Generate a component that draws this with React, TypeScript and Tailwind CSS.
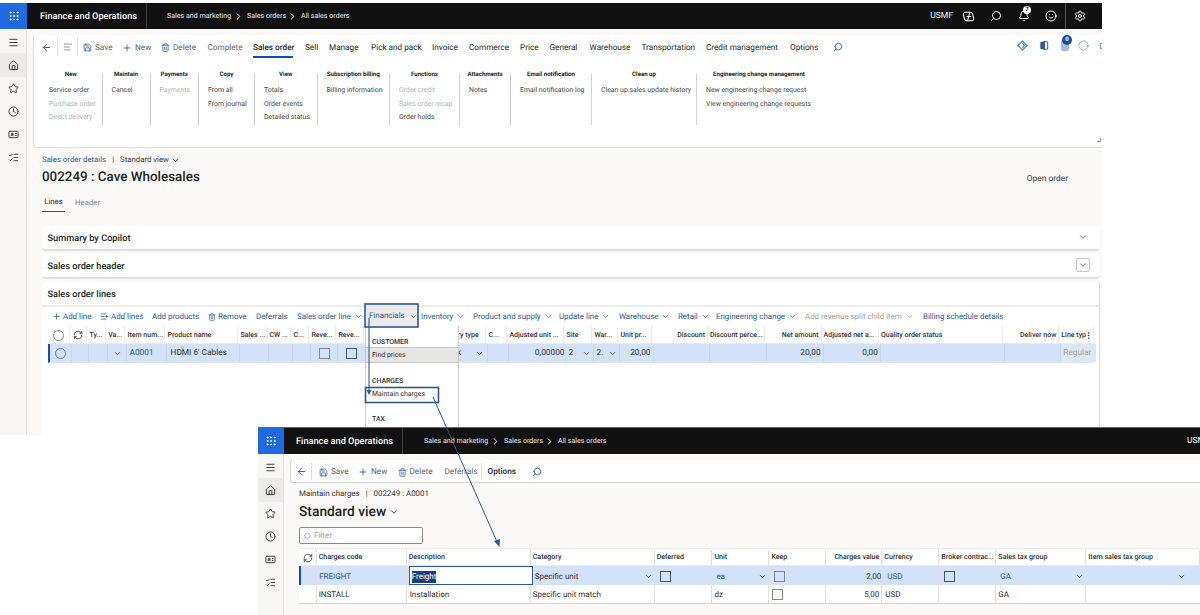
import React from "react";
import { ArrowLeft, Bell, ChevronDown, ChevronRight, Grip, Home, Menu, Plus, RefreshCw, Save, Search, Settings, Smile, Star, Clock, Trash2, AlignLeft, ListChecks, IdCard, EllipsisVertical, ListPlus, Circle } from "lucide-react";

const ink = "text-[#323130]";
const link = "text-[#2b579a]";

function Box({ blue = false }: { blue?: boolean }) {
  return <span className={"block w-[11px] h-[11px] border bg-transparent " + (blue ? "border-[#44546a]" : "border-[#8a8886]")} />;
}

function TopBar() {
  return (
    <div className="flex items-center h-[26px] bg-[#111111] text-white shrink-0">
      <div className="flex items-center justify-center w-[27px] h-full bg-[#1f6ae0] shrink-0">
        <Grip size={12} strokeWidth={2} />
      </div>
      <div className="flex items-center h-full w-[120px] pl-[13px] pt-[1px] border-r border-[#444] text-[9.2px] font-medium whitespace-nowrap shrink-0">Finance and Operations</div>
      <div className="flex items-center pl-[20px] pt-[1px] text-[7.1px] text-[#eeeeee] whitespace-nowrap">
        <span className="w-[60px]">Sales and marketing</span>
        <ChevronRight size={11} className="ml-[6px] mr-[3px]" />
        <span className="w-[36px]">Sales orders</span>
        <ChevronRight size={11} className="ml-[4px] mr-[3px]" />
        <span>All sales orders</span>
      </div>
      <div className="flex-1" />
      <div className="flex items-center h-full">
        <span className="text-[8.5px] mr-[9px]">USMF</span>
        <svg width="13" height="13" viewBox="0 0 14 14" fill="none" stroke="white" strokeWidth="1.1" className="mr-[15px]">
          <path d="M4 2.5h5a2.5 2.5 0 0 1 2.4 1.8l1.1 4.4A2 2 0 0 1 10.6 11.5H5a2.5 2.5 0 0 1-2.4-1.8L1.5 5.3A2.2 2.2 0 0 1 4 2.5z" />
          <path d="M8.5 2.5 6 11.5M5 7h5" />
        </svg>
        <Search size={12} className="mr-[16px] -scale-x-100" />
        <span className="relative mr-[15px]">
          <Bell size={12} />
          <span className="absolute -top-[4px] left-[5px] w-[8px] h-[8px] rounded-full bg-white text-[#111] text-[6px] leading-[8px] text-center font-bold">7</span>
        </span>
        <Smile size={12} className="mr-[8px]" />
        <div className="h-full border-l border-[#555] mr-[8px]" />
        <Settings size={12} className="mr-[16px]" />
      </div>
    </div>
  );
}

function SideIcons({ w }: { w: string }) {
  return (
    <div className={"flex flex-col items-center h-full bg-[#f7f6f5] border-r border-[#e1dfdd] shrink-0 text-[#323130] pt-[2px] " + w}>
      <div className="flex items-center justify-center h-[22px] w-full"><Menu size={11} /></div>
      <div className="flex items-center justify-center h-[24px] w-full bg-[#edebe9]"><Home size={11} /></div>
      <div className="flex items-center justify-center h-[23px] w-full"><Star size={11} /></div>
      <div className="flex items-center justify-center h-[23px] w-full"><Clock size={11} /></div>
      <div className="flex items-center justify-center h-[23px] w-full"><IdCard size={11} /></div>
      <div className="flex items-center justify-center h-[23px] w-full"><ListChecks size={11} /></div>
    </div>
  );
}

function Cmd({ icon, label, w }: { icon?: React.ReactNode; label: string; w: string }) {
  return (
    <span className={"flex items-center gap-[3px] pt-[2px] whitespace-nowrap shrink-0 text-[#5f5e5c] " + w}>
      {icon}
      {label}
    </span>
  );
}

const ribbon = [
  { w: "w-[62.5px]", t: "New", items: [["Service order", 0], ["Purchase order", 1], ["Direct delivery", 1]] },
  { w: "w-[48px]", t: "Maintain", items: [["Cancel", 0]] },
  { w: "w-[48.5px]", t: "Payments", items: [["Payments", 1]] },
  { w: "w-[56px]", t: "Copy", items: [["From all", 0], ["From journal", 0]] },
  { w: "w-[62.5px]", t: "View", items: [["Totals", 0], ["Order events", 0], ["Detailed status", 0]] },
  { w: "w-[72.5px]", t: "Subscription billing", items: [["Billing information", 0]] },
  { w: "w-[70px]", t: "Functions", items: [["Order credit", 1], ["Sales order recap", 1], ["Order holds", 0]] },
  { w: "w-[51px]", t: "Attachments", items: [["Notes", 0]] },
  { w: "w-[81px]", t: "Email notification", items: [["Email notification log", 0]] },
  { w: "w-[105px]", t: "Clean up", items: [["Clean up sales update history", 0]] },
  { w: "w-[124px]", t: "Engineering change management", items: [["New engineering change request", 0], ["View engineering change requests", 0]], last: true },
];

const tabs = [
  ["Sales order", "w-[52px]"], ["Sell", "w-[24px]"], ["Manage", "w-[42px]"], ["Pick and pack", "w-[61px]"], ["Invoice", "w-[37px]"],
  ["Commerce", "w-[51px]"], ["Price", "w-[29.5px]"], ["General", "w-[40px]"], ["Warehouse", "w-[52px]"], ["Transportation", "w-[64.5px]"],
  ["Credit management", "w-[84px]"], ["Options", "w-[40px]"],
] as const;

function CommandCard() {
  return (
    <div className="ml-[6px] mt-[6px] h-[113px] bg-white rounded-l-[4px] border-b border-l border-[#e1dfdd] shrink-0 relative">
      <div className="flex items-center h-[24px] text-[8.2px] whitespace-nowrap">
        <div className="flex items-center justify-center w-[22px] h-[18px] border-r border-[#e1dfdd] ml-[2px]"><ArrowLeft size={11} className="text-[#2b579a]" /></div>
        <div className="flex items-center justify-center w-[20px] h-[18px] border-r border-[#e1dfdd]"><AlignLeft size={10} className="text-[#8a8886]" /></div>
        <div className="flex items-center ml-[5px]">
          <Cmd w="w-[39px]" icon={<Save size={9} className="text-[#2b579a]" />} label="Save" />
          <Cmd w="w-[39px]" icon={<Plus size={10} className="text-[#2b579a]" />} label="New" />
          <Cmd w="w-[46.5px]" icon={<Trash2 size={9} className="text-[#2b579a]" />} label="Delete" />
          <Cmd w="w-[45.5px]" label="Complete" />
        </div>
        <div className="flex items-center text-[#201f1e]">
          {tabs.map(([t, w], i) => (
            <span key={t} className={"relative flex items-center h-[24px] pt-[2px] shrink-0 " + w + (i === 0 ? " font-medium" : "")}>
              {t}
              {i === 0 && <span className="absolute left-0 bottom-[1px] w-[40px] h-[2px] bg-[#0f4cb5]" />}
            </span>
          ))}
        </div>
        <Search size={10} className="ml-[3px] text-[#2b579a] -scale-x-100" />
        <div className="absolute -right-[1px] top-[5px] flex items-center text-[#2b579a]">
          <svg width="11" height="11" viewBox="0 0 12 12" fill="none" stroke="#2b7cd3" strokeWidth="1.2" className="mr-[11px]"><path d="M6 1 11 6 6 11 1 6z" /><path d="M6 3.5 8 6 6 8.5" /></svg>
          <svg width="10" height="11" viewBox="0 0 10 12" className="mr-[12px]"><path d="M1 2.5 6 1v10L1 9.5z" fill="#2b579a" /><path d="M6 2h3v8H6" fill="none" stroke="#2b579a" /></svg>
          <span className="relative mr-[9px]">
            <span className="block w-[8px] h-[11px] rounded-[2px] bg-[#a9bcd6]" />
            <span className="absolute -top-[5px] left-[1px] w-[10px] h-[10px] rounded-full bg-[#0f4cb5] text-white text-[6px] leading-[10px] text-center font-bold">0</span>
          </span>
          <Circle size={11} className="mr-[11px]" strokeWidth={1} />
          <span className="block w-[3px] h-[6px] border border-[#7f9cc4]" />
        </div>
      </div>
      <div className="flex items-start pl-[6px] mt-[15px] text-[6.9px]">
        {ribbon.map((g) => (
          <div key={g.t} className={"h-[51px] shrink-0 " + g.w + (g.last ? "" : " border-r border-[#d2d0ce]")}>
            <div className="h-[12px] -mt-[5px] text-center font-bold text-[#201f1e] text-[6.1px] leading-[12px] whitespace-nowrap">{g.t}</div>
            <div className="pl-[9px] pt-[3px]">
              {g.items.map(([n, d]) => (
                <div key={n as string} className={"h-[13.5px] leading-[13.5px] whitespace-nowrap " + (d ? "text-[#b3b0ad]" : "text-[#484644]")}>{n}</div>
              ))}
            </div>
          </div>
        ))}
      </div>
      <span className="absolute right-[1px] bottom-[5px] w-[4px] h-[4px] border-r border-b border-[#a19f9d]" />
    </div>
  );
}

function SectionCard({ title, boxed = false }: { title: string; boxed?: boolean }) {
  return (
    <div className="flex items-center justify-between h-[24.5px] mr-[2px] pl-[5.5px] pr-[10px] bg-white rounded-[4px] border-b-2 border-[#e1dfdd] shrink-0">
      <span className="pt-[3px] text-[9.2px] font-medium text-[#201f1e]">{title}</span>
      {boxed ? (
        <span className="flex items-center justify-center w-[14px] h-[14px] border border-[#c8c6c4] rounded-[2px]"><ChevronDown size={10} className="text-[#605e5c]" /></span>
      ) : <ChevronDown size={10} className="text-[#605e5c] mr-[2px]" />}
    </div>
  );
}

const backCols = "grid-cols-[22.6px_17.4px_18.7px_19.3px_40px_73px_29px_24px_18px_27px_28px_72px_50px_21px_57px_28px_26px_34px_55.5px_57px_56.6px_57.4px_124px_56.4px_35px]";
const backHead: [string, string?][] = [
  ["", ""], ["", ""], ["Ty..."], ["Va..."], ["Item num..."], ["Product name"], ["Sales ..."], ["CW ..."], ["C..."], ["Reve..."], ["Reve..."], [""],
  ["Delivery type"], ["C..."], ["Adjusted unit ..."], ["Site"], ["War..."], ["Unit pr..."], ["Discount", "r"], ["Discount perce..."], ["Net amount", "r"], ["Adjusted net a..."], ["Quality order status"], ["Deliver now", "r"], ["Line typ"],
];

function BackGrid() {
  const c = "border-r border-[#c8d5ea]";
  return (
    <div className="ml-[5.5px] mr-[5px] text-[#323130]">
      <div className={"grid h-[18px] bg-white border-b border-[#edebe9] text-[7px] font-medium " + backCols}>
        {backHead.map(([t, a], i) => (
          <div key={i} className={"relative flex items-center border-r border-[#edebe9] px-[2px] pt-[1px] whitespace-nowrap overflow-hidden " + (a === "r" ? "justify-end" : "")}>
            {i === 0 && <span className="block mx-auto w-[11px] h-[11px] rounded-full border border-[#8a8886]" />}
            {i === 1 && <RefreshCw size={10} className="mx-auto" />}
            {t}
            {i === 24 && <EllipsisVertical size={9} className="absolute right-0" />}
          </div>
        ))}
      </div>
      <div className={"grid h-[19px] bg-[#d3e2f8] border-b border-[#dfe6f0] border-l-2 border-l-[#0f4cb5] text-[8.3px] [&>div]:pt-[1px] " + backCols}>
        <div className={"flex items-center justify-center " + c}><span className="block w-[11px] h-[11px] rounded-full border border-[#6b7d96]" /></div>
        <div className={c} />
        <div className={c} />
        <div className={"flex items-center justify-center " + c}><ChevronDown size={9} /></div>
        <div className={"flex items-center pl-[2px] " + c + " " + link}>A0001</div>
        <div className={"flex items-center pl-[3px] whitespace-nowrap " + c}>HDMI 6' Cables</div>
        <div className={c} />
        <div className={c} />
        <div className={c} />
        <div className={"flex items-center justify-center " + c}><Box /></div>
        <div className={"flex items-center justify-center " + c}><Box blue /></div>
        <div className={c} />
        <div className={"flex items-center justify-between pr-[3px] pl-[2px] " + c}><span>Stock</span><ChevronDown size={9} /></div>
        <div className={c} />
        <div className={"flex items-center justify-end pr-[1px] " + c}>0,00000</div>
        <div className={"flex items-center justify-between px-[2px] " + c}><span>2</span><ChevronDown size={9} /></div>
        <div className={"flex items-center justify-between px-[2px] " + c}><span>2.</span><ChevronDown size={9} /></div>
        <div className={"flex items-center justify-end pr-[3px] " + c}>20,00</div>
        <div className={c} />
        <div className={c} />
        <div className={"flex items-center justify-end pr-[2px] " + c}>20,00</div>
        <div className={"flex items-center justify-end pr-[2px] " + c}>0,00</div>
        <div className={c} />
        <div className={c} />
        <div className="flex items-center pl-[2px] bg-[#dde6f3] text-[#a19f9d]">Regular</div>
      </div>
    </div>
  );
}

function Tool({ children, chev = false, dim = false, w }: { children: React.ReactNode; chev?: boolean; dim?: boolean; w: string }) {
  return (
    <span className={"flex items-center shrink-0 whitespace-nowrap " + w + " " + (dim ? "text-[#a19f9d]" : link)}>
      {children}
      {chev && <ChevronDown size={9} className="ml-[3px]" />}
    </span>
  );
}

function FinancialsMenu() {
  return (
    <div className="absolute left-[365px] top-[303px] w-[94px] h-[130px] z-10 text-[#323130]">
      <div className="flex items-center h-[23px] w-[53px] pt-[3px] bg-[#edebe9] pl-[4px] text-[7.9px] text-[#2b579a]">
        Financials<ChevronDown size={9} className="ml-[4px]" />
      </div>
      <div className="bg-white border-l border-r border-[#d2d0ce] h-[107px] text-[6.9px]">
        <div className="pl-[6px] pt-[10px] h-[21px] font-medium leading-[12px]">CUSTOMER</div>
        <div className="flex items-center h-[16px] pl-[6px] bg-[#e8e6e4] border border-[#c8c6c4] -ml-[1px] -mr-[1px]">Find prices</div>
        <div className="pl-[6px] pt-[12px] h-[24px] font-medium leading-[12px]">CHARGES</div>
        <div className="flex items-center h-[15px] pl-[6px]">Maintain charges</div>
        <div className="pl-[6px] pt-[12px] font-medium">TAX</div>
      </div>
    </div>
  );
}

function BackWindow() {
  return (
    <div className="absolute left-0 top-0 w-[1102px] h-[435px] overflow-hidden bg-white flex flex-col pt-[3px]">
      <TopBar />
      <div className="flex flex-1 min-h-0">
        <SideIcons w="w-[27px]" />
        <div className="flex-1 min-w-0 bg-[#faf9f8] flex flex-col">
          <CommandCard />
          <div className="flex items-center h-[14px] mt-[5px] ml-[15px] text-[7.8px] whitespace-nowrap shrink-0">
            <span className={link}>Sales order details</span>
            <span className="mx-[6px] text-[#323130]">|</span>
            <span className={ink}>Standard view</span>
            <ChevronDown size={9} className="ml-[2px]" />
          </div>
          <div className="flex items-center justify-between h-[20px] pt-[3px] ml-[15px] shrink-0">
            <span className="text-[13.4px] font-medium text-[#201f1e] whitespace-nowrap">002249 : Cave Wholesales</span>
            <span className="pt-[2px] text-[8.4px] text-[#323130] mr-[34px]">Open order</span>
          </div>
          <div className="flex h-[19px] mt-[6px] ml-[15px] text-[7.8px] shrink-0">
            <span className="flex items-center justify-center w-[23px] border-b border-[#2b579a] text-[#323130]">Lines</span>
            <span className="flex items-center ml-[10px] text-[#8a8886]">Header</span>
          </div>
          <div className="flex flex-col gap-[3.5px] mt-[14px] ml-[15px] flex-1 min-h-0">
            <SectionCard title="Summary by Copilot" />
            <SectionCard title="Sales order header" boxed />
            <div className="flex-1 bg-white mr-[2px] rounded-t-[4px] border-r border-[#e1dfdd]">
              <div className="flex items-center h-[25px] pl-[5.5px] pt-[2px] border-b-2 border-[#edebe9] text-[9.2px] font-medium text-[#201f1e]">Sales order lines</div>
              <div className="flex items-center h-[19px] pl-[10px] pt-[1px] text-[7.9px]">
                <Tool w="w-[48px]"><Plus size={9} className="mr-[2px]" />Add line</Tool>
                <Tool w="w-[52px]"><ListPlus size={9} className="mr-[2px]" />Add lines</Tool>
                <Tool w="w-[56px]">Add products</Tool>
                <Tool w="w-[48px]"><Trash2 size={8} className="mr-[2px]" />Remove</Tool>
                <Tool w="w-[41px]">Deferrals</Tool>
                <Tool w="w-[68px]" chev>Sales order line</Tool>
                <span className="w-[56px] shrink-0" />
                <Tool w="w-[52px]" chev>Inventory</Tool>
                <Tool w="w-[86px]" chev>Product and supply</Tool>
                <Tool w="w-[60px]" chev>Update line</Tool>
                <Tool w="w-[59px]" chev>Warehouse</Tool>
                <Tool w="w-[38px]" chev>Retail</Tool>
                <Tool w="w-[89px]" chev>Engineering change</Tool>
                <Tool w="w-[118px]" chev dim>Add revenue split child item</Tool>
                <Tool w="w-[80px]">Billing schedule details</Tool>
              </div>
              <BackGrid />
            </div>
          </div>
        </div>
      </div>
    </div>
  );
}

const frontCols = "grid-cols-[17.7px_90px_124px_124px_57.7px_57px_56.7px_56.3px_57px_57px_90px_114px]";
const frontHead = ["", "Charges code", "Description", "Category", "Deferred", "Unit", "Keep", "Charges value", "Currency", "Broker contrac...", "Sales tax group", "Item sales tax group"];

function FrontWindow() {
  const b = "border-r border-[#e1dfdd]";
  return (
    <div className="absolute left-[258px] top-[427px] w-[942px] h-[188px] overflow-hidden bg-white flex flex-col z-20 border-t border-[#666]">
      <div className="flex items-center h-[26px] bg-[#111111] text-white shrink-0">
        <div className="flex items-center justify-center w-[26px] h-full bg-[#1f6ae0] shrink-0"><Grip size={12} /></div>
        <div className="flex items-center h-full w-[119px] pl-[12px] pt-[1px] border-r border-[#444] text-[9.2px] font-medium whitespace-nowrap shrink-0">Finance and Operations</div>
        <div className="flex items-center pl-[21px] pt-[1px] text-[7.1px] text-[#eeeeee] whitespace-nowrap">
          <span className="w-[60px]">Sales and marketing</span>
          <ChevronRight size={11} className="ml-[6px] mr-[3px]" />
          <span className="w-[36px]">Sales orders</span>
          <ChevronRight size={11} className="ml-[4px] mr-[3px]" />
          <span>All sales orders</span>
        </div>
        <div className="flex-1" />
        <span className="text-[8.5px] w-[13px] overflow-hidden">USMF</span>
      </div>
      <div className="flex flex-1 min-h-0">
        <SideIcons w="w-[26px]" />
        <div className="flex-1 min-w-0 bg-[#faf9f8] flex flex-col">
          <div className="flex items-center ml-[6px] mt-[6px] h-[23px] pt-[1px] bg-white rounded-l-[4px] border-b border-l border-[#d2d0ce] text-[8.2px] whitespace-nowrap shrink-0">
            <div className="flex items-center justify-center w-[21px] h-[17px] border-r border-[#e1dfdd]"><ArrowLeft size={11} className="text-[#2b579a]" /></div>
            <div className="flex items-center ml-[7px]">
              <Cmd w="w-[39px]" icon={<Save size={9} className="text-[#2b579a]" />} label="Save" />
              <Cmd w="w-[39.5px]" icon={<Plus size={10} className="text-[#2b579a]" />} label="New" />
              <Cmd w="w-[47px]" icon={<Trash2 size={9} className="text-[#2b579a]" />} label="Delete" />
              <Cmd w="w-[36px]" label="Deferrals" />
            </div>
            <span className="h-[17px] border-l border-[#e1dfdd]" />
            <span className="ml-[6px] pt-[2px] w-[33px] font-medium text-[#201f1e]">Options</span>
            <Search size={10} className="ml-[11px] text-[#2b579a] -scale-x-100" />
          </div>
          <div className="flex items-center h-[14px] mt-[4px] ml-[15px] text-[7.9px] text-[#323130] whitespace-nowrap shrink-0">
            Maintain charges<span className="mx-[6px]">|</span>002249 : A0001
          </div>
          <div className="flex items-center h-[20px] ml-[15px] pt-[2px] text-[13.8px] font-medium text-[#201f1e] whitespace-nowrap shrink-0">
            Standard view<ChevronDown size={10} className="ml-[3px]" />
          </div>
          <div className="flex items-center gap-[3px] w-[124px] h-[17px] mt-[6px] ml-[15px] pl-[3px] bg-white border border-[#8a8886] rounded-[2px] text-[8px] text-[#a19f9d] shrink-0">
            <Search size={8} className="-scale-x-100" />Filter
          </div>
          <div className="mt-[4px] ml-[15px] text-[#323130]">
            <div className={"grid h-[18px] pt-[1px] bg-white border-y border-[#edebe9] text-[7.1px] font-medium whitespace-nowrap " + frontCols}>
              {frontHead.map((t, i) => (
                <div key={i} className={"flex items-center pl-[2px] overflow-hidden " + b + (i === 7 ? " justify-end pr-[2px]" : "")}>
                  {i === 0 ? <RefreshCw size={10} className="mx-auto" /> : t}
                </div>
              ))}
            </div>
            <div className={"grid h-[19px] bg-[#d3e2f8] border-l-2 border-l-[#0f4cb5] text-[8px] whitespace-nowrap [&>div]:pt-[2px] " + frontCols}>
              <div className={b} />
              <div className={"flex items-center pl-[0.5px] " + b + " " + link}>FREIGHT</div>
              <div className="flex items-center pl-[2px] bg-white border border-[#2b579a]"><span className="bg-[#1c3d78] text-white">Freight</span></div>
              <div className={"flex items-center justify-between pl-[2px] pr-[3px] " + b}>Specific unit<ChevronDown size={9} /></div>
              <div className={"flex items-center pl-[3px] " + b}><Box blue /></div>
              <div className={"flex items-center justify-between pl-[2px] pr-[3px] " + b + " " + link}>ea<ChevronDown size={9} className="text-[#323130]" /></div>
              <div className={"flex items-center pl-[3px] " + b}><Box /></div>
              <div className={"flex items-center justify-end pr-[2px] " + b}>2,00</div>
              <div className={"flex items-center pl-[3px] " + b + " " + link}>USD</div>
              <div className={"flex items-center pl-[3px] " + b}><Box blue /></div>
              <div className={"flex items-center justify-between pl-[2px] pr-[3px] " + b + " " + link}>GA<ChevronDown size={9} className="text-[#323130]" /></div>
              <div className="flex items-center justify-end pr-[16px]"><ChevronDown size={9} /></div>
            </div>
            <div className={"grid h-[18.5px] bg-white border-b border-[#d2d0ce] text-[8px] whitespace-nowrap [&>div]:pt-[2px] " + frontCols}>
              <div className={b} />
              <div className={"flex items-center pl-[2px] " + b}>INSTALL</div>
              <div className={"flex items-center pl-[3px] " + b}>Installation</div>
              <div className={"flex items-center pl-[2px] " + b}>Specific unit match</div>
              <div className={b} />
              <div className={"flex items-center pl-[2px] " + b}>dz</div>
              <div className={"flex items-center pl-[3px] " + b}><Box /></div>
              <div className={"flex items-center justify-end pr-[2px] " + b}>5,00</div>
              <div className={"flex items-center pl-[3px] " + b}>USD</div>
              <div className={b} />
              <div className={"flex items-center pl-[2px] " + b}>GA</div>
              <div />
            </div>
          </div>
        </div>
      </div>
    </div>
  );
}

function Annotations() {
  const c = "#2f5597";
  return (
    <svg width="1200" height="615" viewBox="0 0 1200 615" fill="none" className="absolute left-0 top-0 z-30 pointer-events-none">
      <rect x="365" y="304" width="53" height="23" stroke={c} strokeWidth="1.6" />
      <rect x="365.5" y="387.5" width="73" height="15" stroke={c} strokeWidth="1.6" />
      <path d="M369 318V391" stroke={c} strokeWidth="1.1" />
      <path d="M366.5 390 369 395 371.5 390z" fill={c} />
      <path d="M433 397 498 544" stroke={c} strokeWidth="1" />
      <path d="M494 541 499.5 547 500 539z" fill={c} />
    </svg>
  );
}

export default function App() {
  return (
    <div className="relative w-[1200px] h-[615px] overflow-hidden bg-white [text-rendering:geometricPrecision] font-['Roboto','Liberation_Sans',sans-serif]">
      <BackWindow />
      <FinancialsMenu />
      <FrontWindow />
      <Annotations />
    </div>
  );
}
